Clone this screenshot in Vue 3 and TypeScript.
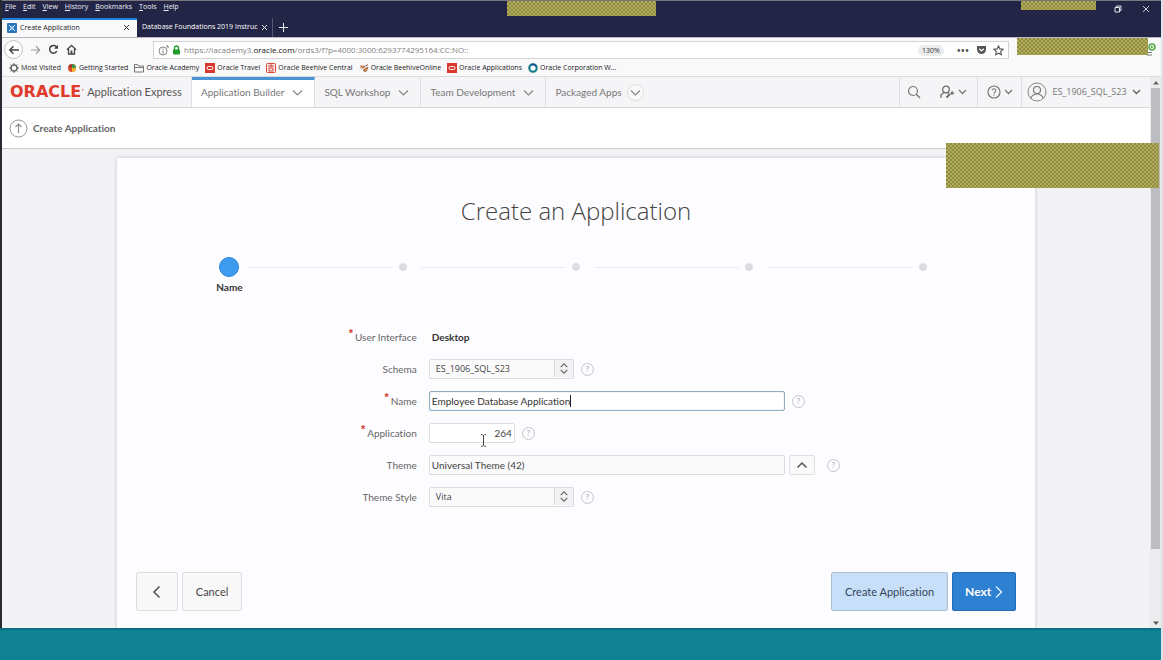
<script setup lang="ts">
import { ref } from 'vue'

const menus = ['File', 'Edit', 'View', 'History', 'Bookmarks', 'Tools', 'Help']

interface Bookmark { label: string; icon: 'gear' | 'fox' | 'folder' | 'red' | 'hive' | 'bee' | 'globe' }
const bookmarks: Bookmark[] = [
  { label: 'Most Visited', icon: 'gear' },
  { label: 'Getting Started', icon: 'fox' },
  { label: 'Oracle Academy', icon: 'folder' },
  { label: 'Oracle Travel', icon: 'red' },
  { label: 'Oracle Beehive Central', icon: 'hive' },
  { label: 'Oracle BeehiveOnline', icon: 'bee' },
  { label: 'Oracle Applications', icon: 'red' },
  { label: 'Oracle Corporation W...', icon: 'globe' },
]

const sections = [
  { label: 'Application Builder', active: true, ring: false },
  { label: 'SQL Workshop', active: false, ring: false },
  { label: 'Team Development', active: false, ring: false },
  { label: 'Packaged Apps', active: false, ring: true },
]

const steps = ['Name', '', '', '', '']
const schema = ref('ES_1906_SQL_S23')
const appName = ref('Employee Database Application')
const appId = ref('264')
const theme = ref('Universal Theme (42)')
const themeStyle = ref('Vita')
</script>

<template>
  <div class="screen">
    <div class="browser">
      <header class="chrome">
        <nav class="menus">
          <button v-for="m in menus" :key="m" type="button"><u>{{ m[0] }}</u>{{ m.slice(1) }}</button>
          <span class="win">
            <button type="button" aria-label="Restore">
              <svg width="8" height="8" viewBox="0 0 8 8"><path d="M2.5 2.5V1h4.500v4.500H5.500M1 2.500h4.500V7H1z" fill="none" stroke="#e4e4ee" /></svg>
            </button>
            <button type="button" aria-label="Close window">
              <svg width="8" height="8" viewBox="0 0 8 8"><path d="M1 1l6 6M7 1L1 7" stroke="#c9c9d8" /></svg>
            </button>
          </span>
        </nav>
        <div class="tabs">
          <div class="tab on">
            <svg width="10" height="10" viewBox="0 0 10 10"><rect width="10" height="10" rx="1" fill="#2a76b8" /><path d="M2 2l2 2M8 2L6 4M2 8l2-2M8 8L6 6M4 4h2v2H4z" stroke="#d5e9fa" fill="none" /></svg>
            <span>Create Application</span>
            <button type="button" aria-label="Close tab"><svg width="7" height="7" viewBox="0 0 7 7"><path d="M1 1l5 5M6 1L1 6" stroke="#333" /></svg></button>
          </div>
          <div class="tab">
            <span>Database Foundations 2019 Instruc</span>
            <button type="button" aria-label="Close tab"><svg width="7" height="7" viewBox="0 0 7 7"><path d="M1 1l5 5M6 1L1 6" stroke="#e6e6ee" /></svg></button>
          </div>
          <button class="plus" type="button" aria-label="New tab"><svg width="9" height="9" viewBox="0 0 9 9"><path d="M4.500 0v9M0 4.500h9" stroke="#eee" /></svg></button>
        </div>
      </header>

      <div class="toolbar">
        <button class="round" type="button" aria-label="Back"><svg width="12" height="10" viewBox="0 0 12 10"><path d="M11 5H2M5.500 1.200L1.700 5l3.800 3.800" fill="none" stroke="#444" stroke-width="1.400" /></svg></button>
        <button type="button" aria-label="Forward"><svg width="11" height="10" viewBox="0 0 11 10"><path d="M1 5h8M6 1.200L9.600 5 6 8.800" fill="none" stroke="#999" stroke-width="1.200" /></svg></button>
        <button type="button" aria-label="Reload"><svg width="11" height="11" viewBox="0 0 11 11"><path d="M8.800 7.200A3.800 3.800 0 1 1 8.500 3" fill="none" stroke="#444" stroke-width="1.500" /><path d="M10 .8v4H6z" fill="#444" /></svg></button>
        <button type="button" aria-label="Home"><svg width="11" height="11" viewBox="0 0 11 11"><path d="M1 5.800L5.500 1.300 10 5.800M2.500 5v5h6V5" fill="none" stroke="#444" stroke-width="1.300" /><path d="M4.600 6.500h1.800V10H4.600z" fill="#444" /></svg></button>
        <div class="url">
          <svg width="11" height="11" viewBox="0 0 11 11"><circle cx="5" cy="6" r="4" fill="none" stroke="#888" /><path d="M5 5.500V8.500M5 3.500v1M8 1h2v2" stroke="#777" fill="none" /></svg>
          <svg width="9" height="10" viewBox="0 0 9 10"><path d="M2.500 5V3a2 2 0 0 1 4 0v2" fill="none" stroke="#1f9d2b" stroke-width="1.400" /><rect x="1" y="4.500" width="7" height="5" rx="1" fill="#1f9d2b" /></svg>
          <span class="address">https://iacademy3.<b>oracle.com</b>/ords3/f?p=4000:3000:6293774295164:CC:NO::</span>
          <span class="zoom">130%</span>
          <span class="dots">•••</span>
          <svg width="11" height="10" viewBox="0 0 11 10"><path d="M1 1h9v3.500a4.500 4.500 0 0 1-9 0z" fill="#555" /><path d="M3.200 3.800L5.500 6l2.300-2.200" fill="none" stroke="#fff" stroke-width="1.200" /></svg>
          <svg class="star" width="11" height="11" viewBox="0 0 11 11"><path d="M5.500 1l1.400 2.900 3.100.4-2.300 2.200.6 3.200-2.800-1.500-2.800 1.500.6-3.200L1 4.300l3.100-.4z" fill="none" stroke="#555" stroke-width="1.100" /></svg>
        </div>
        <svg class="status" width="10" height="14" viewBox="0 0 10 14"><circle cx="5" cy="4" r="3" fill="#e9f6e4" stroke="#58a84a" stroke-width="1.500" /><path d="M4 2.500v3L6.500 4z" fill="#58a84a" /><path d="M0 9.500h5M0 12h5" stroke="#777" /></svg>
      </div>

      <nav class="bookmarks">
        <a v-for="b in bookmarks" :key="b.label" href="#">
          <svg width="10" height="10" viewBox="0 0 10 10">
            <template v-if="b.icon === 'gear'"><circle cx="5" cy="5" r="3" fill="none" stroke="#666" stroke-width="1.500" /><path d="M5 0v2M5 8v2M0 5h2M8 5h2M1.500 1.500L3 3M7 7l1.500 1.500M8.500 1.500L7 3M3 7L1.500 8.500" stroke="#666" /></template>
            <template v-else-if="b.icon === 'fox'"><circle cx="5" cy="5" r="4" fill="#d94b2b" /><path d="M5 1a4 4 0 0 1 4 4H5z" fill="#3f9a4a" /><path d="M5 5h4a4 4 0 0 1-4 4z" fill="#f2b431" /><circle cx="3.500" cy="3" r="1.500" fill="#8b3325" /></template>
            <template v-else-if="b.icon === 'folder'"><path d="M.5 1.500h3l1 1.500h5v6h-9zM.5 4.500h9" fill="none" stroke="#777" /></template>
            <template v-else-if="b.icon === 'red'"><rect width="10" height="10" fill="#d6382c" /><rect x="2" y="3.500" width="6" height="3" rx="1.500" fill="none" stroke="#fff" /></template>
            <template v-else-if="b.icon === 'hive'"><rect x=".5" y=".5" width="9" height="9" rx="1" fill="#fbe9e7" stroke="#d6493c" /><path d="M2 3h6M5 1v3M3 5h4v3H3z" fill="none" stroke="#d6493c" /></template>
            <template v-else-if="b.icon === 'bee'"><path d="M1 2.500h4l1 2-2 1.500L1.500 5z" fill="#c98b62" /><path d="M5 4l4-2.500M4 7.500l3 1L9 4z" fill="#e6b13a" stroke="#9b5a41" /></template>
            <template v-else><circle cx="5" cy="5" r="3.700" fill="#fff" stroke="#157f88" stroke-width="2.200" /><path d="M3 1.800a4 4 0 0 1 5 1.500" fill="none" stroke="#26509a" stroke-width="1.500" /></template>
          </svg>
          <span>{{ b.label }}</span>
        </a>
      </nav>

      <div class="viewport">
        <main class="page">
          <header class="apex">
            <a class="brand" href="#"><span class="oracle">ORACLE</span><i>’</i><span class="express">Application Express</span></a>
            <button v-for="s in sections" :key="s.label" type="button" class="section" :class="{ on: s.active, ring: s.ring }">
              <span>{{ s.label }}</span>
              <svg width="17" height="17" viewBox="0 0 17 17"><circle v-if="s.ring" cx="8.500" cy="8.500" r="8" fill="#fafafa" stroke="#dcdce0" /><path d="M4 6.500l4.500 4.500L13 6.500" fill="none" stroke="#888" stroke-width="1.200" /></svg>
            </button>
            <span class="grow"></span>
            <button class="tool search" type="button" aria-label="Search"><svg width="14" height="14" viewBox="0 0 14 14"><circle cx="6" cy="6" r="4.500" fill="none" stroke="#777" stroke-width="1.200" /><path d="M9.300 9.300L13 13" stroke="#777" stroke-width="1.400" /></svg></button>
            <button class="tool admin" type="button" aria-label="Administration">
              <svg width="15" height="14" viewBox="0 0 15 14"><circle cx="6" cy="4.500" r="3.300" fill="none" stroke="#666" stroke-width="1.200" /><path d="M4.300 7.500L1 9.500V13M7.500 7.500l1 1" fill="none" stroke="#666" stroke-width="1.200" /><path d="M6.500 12.500l3.500-3.500" stroke="#666" stroke-width="1.800" /><path d="M12.800 6.500l-1.800 1.800 1 1 2-1.500" fill="none" stroke="#666" stroke-width="1.200" /></svg>
              <svg width="9" height="6" viewBox="0 0 9 6"><path d="M1 1l3.500 3.500L8 1" fill="none" stroke="#777" stroke-width="1.300" /></svg>
            </button>
            <button class="tool help-menu" type="button" aria-label="Help">
              <svg width="14" height="14" viewBox="0 0 14 14"><circle cx="7" cy="7" r="6" fill="none" stroke="#777" stroke-width="1.200" /><path d="M5.200 5.500a1.800 1.800 0 1 1 2.500 1.700c-.6.300-.7.600-.7 1.300M7 9.500v1.200" fill="none" stroke="#777" stroke-width="1.100" /></svg>
              <svg width="9" height="6" viewBox="0 0 9 6"><path d="M1 1l3.500 3.500L8 1" fill="none" stroke="#777" stroke-width="1.300" /></svg>
            </button>
            <button class="tool user" type="button">
              <svg width="20" height="20" viewBox="0 0 20 20"><circle cx="10" cy="10" r="9" fill="none" stroke="#888" /><circle cx="10" cy="8" r="3.500" fill="none" stroke="#777" stroke-width="1.200" /><path d="M4 16.500c0-2.500 2-3.500 4.500-4.500h3c2.500 1 4.500 2 4.500 4.500" fill="none" stroke="#777" stroke-width="1.200" /></svg>
              <span>ES_1906_SQL_S23</span>
              <svg width="9" height="6" viewBox="0 0 9 6"><path d="M1 1l3.500 3.500L8 1" fill="none" stroke="#666" stroke-width="1.400" /></svg>
            </button>
          </header>

          <div class="crumb">
            <a href="#" aria-label="Up one level"><svg width="19" height="19" viewBox="0 0 19 19"><circle cx="9.500" cy="9.500" r="8.500" fill="none" stroke="#8a8a90" stroke-width=".9" /><path d="M9.500 14V5M6.500 8l3-3 3 3" fill="none" stroke="#888" stroke-width="1.100" /></svg></a>
            <span>Create Application</span>
          </div>

          <div class="backdrop">
            <form class="card" @submit.prevent>
              <h1>Create an Application</h1>
              <ol class="steps">
                <li v-for="(s, i) in steps" :key="i" :class="{ current: i === 0 }"><i></i><span>{{ s }}</span></li>
              </ol>
              <div class="fields">
                <div class="row"><span class="label"><em>*</em>User Interface</span><strong>Desktop</strong></div>
                <div class="row">
                  <label class="label" for="schema">Schema</label>
                  <span class="pick"><select id="schema" v-model="schema"><option>ES_1906_SQL_S23</option></select><svg width="19" height="17" viewBox="0 0 19 17"><path d="M6 7l3.500-3.500L13 7M6 10l3.500 3.500L13 10" fill="none" stroke="#666" stroke-width="1.200" /></svg></span>
                  <button class="help" type="button" aria-label="Help on Schema">?</button>
                </div>
                <div class="row">
                  <label class="label" for="name"><em>*</em>Name</label>
                  <span class="wide focus"><input id="name" v-model="appName" type="text" /><i class="caret"></i></span>
                  <button class="help" type="button" aria-label="Help on Name">?</button>
                </div>
                <div class="row">
                  <label class="label" for="app"><em>*</em>Application</label>
                  <span class="short"><input id="app" v-model="appId" type="text" /><svg class="ibeam" width="7" height="13" viewBox="0 0 7 13"><path d="M1 .7h1.500l1 1 1-1H6M1 12.300h1.500l1-1 1 1H6M3.500 1.500v10" fill="none" stroke="#444" /></svg></span>
                  <button class="help" type="button" aria-label="Help on Application">?</button>
                </div>
                <div class="row">
                  <label class="label" for="theme">Theme</label>
                  <span class="wide"><input id="theme" v-model="theme" type="text" readonly /></span>
                  <button class="lov" type="button" aria-label="Choose theme"><svg width="12" height="8" viewBox="0 0 12 8"><path d="M1.500 6.500L6 2l4.500 4.500" fill="none" stroke="#555" stroke-width="1.500" /></svg></button>
                  <button class="help" type="button" aria-label="Help on Theme">?</button>
                </div>
                <div class="row">
                  <label class="label" for="style">Theme Style</label>
                  <span class="pick"><select id="style" v-model="themeStyle"><option>Vita</option></select><svg width="19" height="17" viewBox="0 0 19 17"><path d="M6 7l3.500-3.500L13 7M6 10l3.500 3.500L13 10" fill="none" stroke="#666" stroke-width="1.200" /></svg></span>
                  <button class="help" type="button" aria-label="Help on Theme Style">?</button>
                </div>
              </div>
              <footer class="actions">
                <button class="btn back" type="button" aria-label="Previous"><svg width="9" height="14" viewBox="0 0 9 14"><path d="M7.500 1.500L2 7l5.500 5.500" fill="none" stroke="#555" stroke-width="1.600" /></svg></button>
                <button class="btn" type="button">Cancel</button>
                <span class="grow"></span>
                <button class="btn create" type="button">Create Application</button>
                <button class="btn next" type="submit">Next <svg width="8" height="14" viewBox="0 0 8 14"><path d="M1 1.500L6.500 7 1 12.500" fill="none" stroke="#e6f2ff" stroke-width="1.400" /></svg></button>
              </footer>
            </form>
          </div>
        </main>
        <div class="scroll">
          <svg width="8" height="6" viewBox="0 0 8 6"><path d="M1 4.500L4 1l3 3.500" fill="#666" /></svg>
          <i></i>
          <svg width="8" height="6" viewBox="0 0 8 6"><path d="M1 1.500L4 5l3-3.500" fill="#555" /></svg>
        </div>
      </div>
    </div>
    <div class="band"></div>

    <div class="mask m1"></div>
    <div class="mask m2"></div>
    <div class="mask m3"></div>
    <div class="mask m4"></div>
  </div>
</template>

<style>
body { margin: 0; background: #f2f2f4; }
</style>

<style scoped>
* { box-sizing: border-box; }
.screen { position: relative; min-height: 100vh; display: flex; flex-direction: column; font-family: Lato, "Open Sans", sans-serif; font-size: 10px; line-height: 14px; font-variant-ligatures: none; color: #555; border-right: 2px solid #dfe2e6; }
button { font: inherit; color: inherit; background: none; border: 0; padding: 0; display: inline-flex; align-items: center; justify-content: center; }
a { color: inherit; text-decoration: none; }
svg { flex: none; display: block; }
.grow { flex: 1; }
.browser { flex: 1; display: flex; flex-direction: column; border-left: 2px solid #2a2a33; }

.chrome { background: #232546; border-top: 1px solid #77777c; }
.menus { height: 17px; display: flex; gap: 7px; padding: 0 11px 6px 3px; color: #f0f0f8; font: 7px/11px "Open Sans", sans-serif; }
.win { margin-left: auto; display: flex; gap: 20px; padding-top: 5px; }
.tabs { display: flex; height: 19px; font: 7px/16px "Open Sans", sans-serif; }
.tab { width: 135px; display: flex; align-items: center; gap: 3px; padding: 0 7px 1px 5px; color: #fff; white-space: nowrap; }
.tab.on { background: #f9f9fa; color: #222; border-top: 2px solid #1d7fd8; padding-bottom: 2px; }
.tab span { flex: 1; }
.plus { width: 22px; border-left: 1px solid #565872; }

.toolbar { display: flex; align-items: center; gap: 8px; height: 24px; padding-left: 2px; background: #f9f9fa; border-top: 1px solid #b8b8c0; }
.round { width: 19px; height: 19px; border: 1px solid #c3c3c8; border-radius: 50%; background: #fff; }
.url { flex: 1; height: 18px; margin: 1px 0 0 68px; padding: 0 4px; display: flex; align-items: center; gap: 3px; background: #fff; border: 1px solid #d2d2d8; white-space: nowrap; }
.address { flex: 1; color: #808080; font: 8px/14px "Open Sans", sans-serif; }
.address b { font-weight: 400; color: #111; }
.zoom { padding: 0 4px; border-radius: 6px; background: #ececef; font: 7px/11px "Open Sans", sans-serif; color: #333; margin-right: 10px; }
.dots { font-size: 7px; margin-right: 4px; }
.url .star { margin-left: 3px; }
.status { margin: 0 4px 0 130px; }
.toolbar > button + button { margin-left: -1px; }

.bookmarks { display: flex; gap: 6px; height: 16px; padding: 0 0 2px 7px; background: #f9f9fa; border-bottom: 1px solid #dcdce0; color: #222; font: 7px/14px "Open Sans", sans-serif; white-space: nowrap; }
.bookmarks a { display: flex; align-items: center; gap: 2px; }

.viewport { flex: 1; display: flex; }
.page { flex: 1; min-width: 0; display: flex; flex-direction: column; }
.scroll { width: 11px; display: flex; flex-direction: column; align-items: center; gap: 2px; padding: 3px 0 2px; background: #ececee; }
.scroll i { width: 9px; height: 461px; background: #bdbdc1; }
.scroll svg:last-child { margin-top: auto; }

.apex { display: flex; height: 31px; background: #f5f4f6; border-bottom: 1px solid #d8d8dc; color: #777; }
.brand { width: 190px; display: flex; align-items: center; padding-left: 8px; white-space: nowrap; border-right: 1px solid #e0e0e4; }
.oracle { color: #e03a2c; font: bold 16px/20px "DejaVu Sans", sans-serif; }
.brand i { color: #e03a2c; width: 6px; }
.express { color: #555; font-size: 11px; }
.section { gap: 5px; padding: 0 8px 0 9px; border-right: 1px solid #dedee2; white-space: nowrap; }
.section.on { background: #fff; border-top: 3px solid #4a93d2; padding-bottom: 3px; }
.section.ring { border-right: 0; }
.tool { border-left: 1px solid #dedee2; gap: 3px; }
.search { width: 29px; }
.admin { width: 49px; border-left-color: transparent; }
.help-menu { width: 44px; }
.user { width: 129px; gap: 5px; padding-right: 4px; font: 9px/14px "Open Sans", sans-serif; }

.crumb { height: 41px; display: flex; align-items: center; gap: 5px; padding-left: 7px; background: #fff; border-bottom: 1px solid #c9cbd0; font-weight: 700; color: #666; }
.backdrop { flex: 1; display: flex; justify-content: center; background: #f3f2f4; padding-top: 9px; }
.card { width: 80%; background: #fdfcff; box-shadow: 0 0 4px #c4c4c8; display: flex; flex-direction: column; padding: 36px 19px 17px; clip-path: inset(-6px -6px 0 -6px); }
h1 { margin: 0; text-align: center; font: 300 24px/34px "Open Sans", sans-serif; color: #444; }
.steps { list-style: none; margin: 29px 7px 0; padding: 0; display: flex; }
.steps li { position: relative; flex: 1; display: flex; flex-direction: column; align-items: center; gap: 3px; height: 43px; }
.steps i { width: 20px; height: 20px; display: flex; border: 6px solid #fdfcff; border-radius: 50%; background: #dcdce2; background-clip: padding-box; z-index: 1; }
.steps .current i { border: 1px solid #2b83d6; background: #3e9bf0; }
.steps li + li::before { content: ""; position: absolute; left: -50%; right: 50%; top: 10px; height: 1px; margin: 0 10px 0 18px; background: #ebebf0; }
.steps span { font-weight: 700; color: #333; }
.fields { margin-top: 21px; }
.row { display: flex; align-items: center; height: 32px; gap: 7px; color: #444; }
.label { width: 281px; margin-right: 5px; text-align: right; color: #666; }
.label em { color: #d8402f; font: bold 11px/6px "Liberation Sans", sans-serif; margin-right: 2px; vertical-align: 4px; }
.row strong { color: #333; margin-left: 3px; }
input, select { font: inherit; color: #444; margin: 0; width: 100%; height: 20px; padding: 0 2px; border: 1px solid #dcdce0; border-radius: 2px; background: #fff; outline: 0; appearance: none; }
.wide, .pick, .short { position: relative; }
.row > .wide { width: 356px; }
.row > .pick { width: 145px; }
.row > .short { width: 86px; }
.short input { text-align: right; }
.wide input[readonly] { background: #fafafb; }
.focus input { border: 1px solid #8fafc4; box-shadow: inset 0 0 1px #8fafc4; color: #333; }
.caret { position: absolute; left: 141px; top: 4px; width: 1px; height: 12px; background: #222; }
.ibeam { position: absolute; left: 51px; top: 11px; }
.pick select { padding-left: 6px; background: #fafafb; font: 9px/14px "Open Sans", sans-serif; }
.pick svg { position: absolute; right: 1px; top: 1px; border-left: 1px solid #dcdce0; background: #f2f2f4; pointer-events: none; }
.help { width: 13px; height: 13px; border: 1px solid #c4c4ca; border-radius: 50%; color: #aaa; font-size: 8px; line-height: 11px; }
.lov { width: 26px; height: 20px; border: 1px solid #e0e0e4; border-radius: 2px; background: #fafafb; margin: 0 5px 0 -3px; }
.actions { display: flex; gap: 4px; margin-top: auto; }
.btn { height: 39px; padding: 0 13px; border: 1px solid #dedee2; border-radius: 2px; background: #f8f8f9; font-size: 11px; color: #444; }
.back { width: 42px; }
.create { background: #c8dffa; border-color: #a9bfd6; color: #34465a; }
.next { padding: 0 12px; background: #2d80d2; border-color: #236cb8; color: #fff; font-size: 12px; font-weight: 700; gap: 4px; }

.band { height: 32px; background: #108293; border-top: 2px solid #0d6f80; }
.mask { position: absolute; background: repeating-conic-gradient(#b3ae55 0 25%, #8f8c48 0 50%) 0 0 / 4px 4px; }
.m1 { left: 507px; top: 1px; width: 149px; height: 15px; }
.m2 { right: 65px; top: 1px; width: 75px; height: 9px; }
.m3 { right: 13px; top: 38px; width: 131px; height: 17px; }
.m4 { right: 2px; top: 143px; width: 213px; height: 45px; }
</style>
